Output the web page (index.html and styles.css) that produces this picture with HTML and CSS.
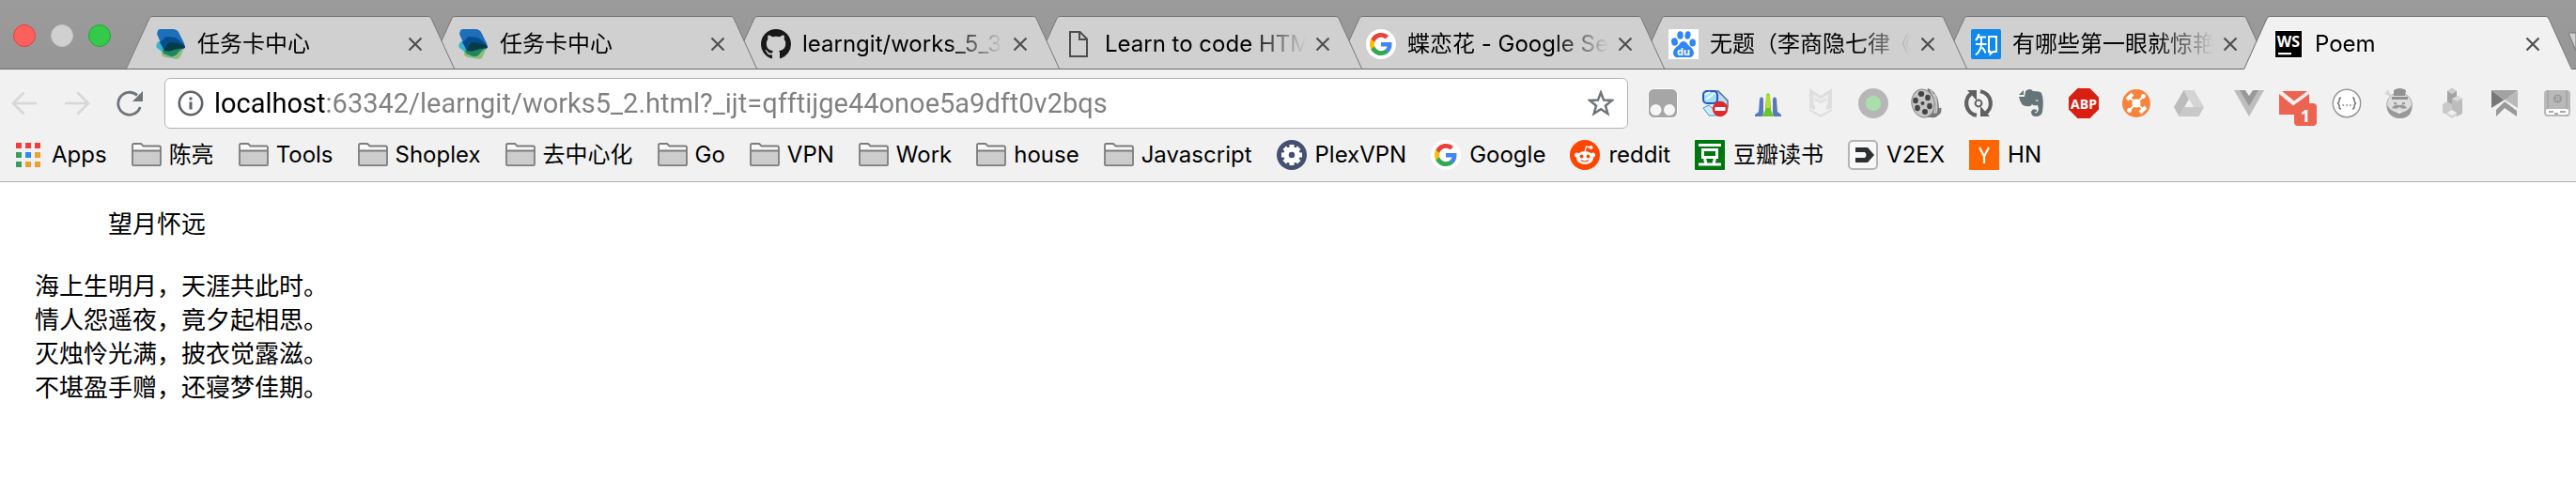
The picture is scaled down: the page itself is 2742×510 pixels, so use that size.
FILE: index.html
```
<!DOCTYPE html>
<html lang="zh-CN">
<head>
<meta charset="utf-8">
<title>Poem</title>
<link rel="stylesheet" href="styles.css">
</head>
<body>
<svg class="defs" aria-hidden="true">
  <symbol id="close" viewBox="0 0 16 16"><path d="M1.500 1.500 14.500 14.500M14.500 1.500 1.500 14.500" fill="none" stroke="#505050" stroke-width="2.200"/></symbol>
  <symbol id="edge-left" viewBox="0 0 28 56" preserveAspectRatio="none"><path class="edge-fill" d="M0 56 25 2.500Q26 .5 28 .5V56Z"/><path class="edge-line" d="M.5 56 25 2.500Q26 .5 28 .5"/></symbol>
  <symbol id="edge-right" viewBox="0 0 28 56" preserveAspectRatio="none"><path class="edge-fill" d="M28 56 3 2.500Q2 .5 0 .5V56Z"/><path class="edge-line" d="M27.500 56 3 2.500Q2 .5 0 .5"/></symbol>
  <symbol id="folder" viewBox="0 0 32 32"><path d="M1 27V5.500Q1 4 2.500 4H10L13 7.500H29.500Q31 7.500 31 9V27Q31 27.500 30 27.500H2Q1 27.500 1 27Z" fill="#f8f8f8"/><path d="M1.500 12H30.500V26.500H1.500Z" fill="#ccc"/><path d="M1 26V5.500Q1 4 2.500 4H9.500Q10.500 4 11 5L12.500 6.500H29.500Q31 6.500 31 8V26Q31 27.200 30 27.200H2Q1 27.200 1 26ZM1 11.500H31" fill="none" stroke="#7c7c7c" stroke-width="1.800"/></symbol>
  <symbol id="cards" viewBox="0 0 32 32"><path d="M6 24Q5 29 10 30L22 32Q25 32 26 29L30 20 12 19Z" fill="#8fbd78"/><path d="M3 13Q-1 16 1 20L12 28Q16 31 21 27L30 20 20 11Z" fill="#35b6cc"/><path d="M2 2Q2 0 5 0H18Q22 0 24 3L30 15Q31 18 30 20L12 23Q8 23 7 19L1 5Z" fill="#1d6fba"/><path d="M8 11Q9 8 12 8L20 9Q23 10 25 12L31 18V20L13 23Q8 23 7 19L4 14Z" fill="#054d8e"/><path d="M10 20Q12 15 16 14L27 16Q30 17 31 20 22 22 18 26Q12 26 8 23Z" fill="#053c48"/><path d="M7 22Q13 25 19 22L30 20Q26 21 23 26 20 30 16 29L8 26Z" fill="#22855f"/></symbol>
  <symbol id="google" viewBox="0 0 32 32"><circle cx="16" cy="16" r="16" fill="#fff"/><g transform="translate(4 4)"><path fill="#4285f4" d="M23.500 12.270c0-.79-.07-1.540-.19-2.270H12v4.510h6.470c-.29 1.480-1.140 2.730-2.400 3.580v3h3.860c2.260-2.090 3.570-5.170 3.570-8.820z"/><path fill="#34a853" d="M12 24c3.240 0 5.950-1.080 7.930-2.910l-3.860-3c-1.080.72-2.450 1.160-4.070 1.160-3.130 0-5.780-2.110-6.730-4.960H1.290v3.090C3.260 21.300 7.310 24 12 24z"/><path fill="#fbbc05" d="M5.270 14.290A7.200 7.200 0 0 1 4.890 12c0-.8.140-1.570.38-2.290V6.620H1.290A11.900 11.900 0 0 0 0 12c0 1.940.47 3.770 1.290 5.380l3.980-3.090z"/><path fill="#ea4335" d="M12 4.750c1.770 0 3.350.61 4.600 1.800l3.420-3.420C17.950 1.190 15.240 0 12 0 7.310 0 3.260 2.700 1.290 6.620l3.980 3.090C6.220 6.860 8.870 4.750 12 4.750z"/></g></symbol>
</svg>

<header class="browser">
  <div class="strip">
    <div class="lights">
      <button class="light red" aria-label="Close window"></button>
      <button class="light grey" aria-label="Minimize window"></button>
      <button class="light green" aria-label="Zoom window"></button>
    </div>
    <div class="tabs" role="tablist">
      <div class="tab" role="tab"><svg class="edge"><use href="#edge-left"/></svg><div class="tab-body"><svg class="icon"><use href="#cards"/></svg><span class="title">任务卡中心</span><button class="close" aria-label="Close tab"><svg><use href="#close"/></svg></button></div><svg class="edge"><use href="#edge-right"/></svg></div>
      <div class="tab" role="tab"><svg class="edge"><use href="#edge-left"/></svg><div class="tab-body"><svg class="icon"><use href="#cards"/></svg><span class="title">任务卡中心</span><button class="close" aria-label="Close tab"><svg><use href="#close"/></svg></button></div><svg class="edge"><use href="#edge-right"/></svg></div>
      <div class="tab" role="tab"><svg class="edge"><use href="#edge-left"/></svg><div class="tab-body"><svg class="icon" viewBox="0 0 16 16"><path fill="#191717" d="M8 0C3.580 0 0 3.580 0 8c0 3.540 2.290 6.530 5.470 7.590.4.070.55-.17.55-.38 0-.19-.01-.82-.01-1.490-2.010.37-2.530-.49-2.690-.94-.09-.23-.48-.94-.82-1.130-.28-.15-.68-.52-.01-.53.63-.01 1.080.58 1.230.82.72 1.210 1.870.87 2.330.66.07-.52.28-.87.51-1.070-1.780-.2-3.640-.89-3.640-3.950 0-.87.31-1.590.82-2.150-.08-.2-.36-1.020.08-2.120 0 0 .67-.21 2.200.82.64-.18 1.320-.27 2-.27s1.360.09 2 .27c1.530-1.040 2.200-.82 2.200-.82.44 1.100.16 1.920.08 2.120.51.56.82 1.270.82 2.150 0 3.070-1.870 3.750-3.650 3.950.29.25.54.73.54 1.480 0 1.070-.01 1.930-.01 2.200 0 .21.150.46.55.38A8.010 8.010 0 0 0 16 8c0-4.420-3.580-8-8-8z"/></svg><span class="title">learngit/works_5_3.html</span><button class="close" aria-label="Close tab"><svg><use href="#close"/></svg></button></div><svg class="edge"><use href="#edge-right"/></svg></div>
      <div class="tab" role="tab"><svg class="edge"><use href="#edge-left"/></svg><div class="tab-body"><svg class="icon" viewBox="0 0 32 32"><path d="M7 3H17.500L25 10.500V29H7ZM17 3V11H25" fill="none" stroke="#4d4d4d" stroke-width="2"/></svg><span class="title">Learn to code HTML</span><button class="close" aria-label="Close tab"><svg><use href="#close"/></svg></button></div><svg class="edge"><use href="#edge-right"/></svg></div>
      <div class="tab" role="tab"><svg class="edge"><use href="#edge-left"/></svg><div class="tab-body"><svg class="icon"><use href="#google"/></svg><span class="title">蝶恋花 - Google Search</span><button class="close" aria-label="Close tab"><svg><use href="#close"/></svg></button></div><svg class="edge"><use href="#edge-right"/></svg></div>
      <div class="tab" role="tab"><svg class="edge"><use href="#edge-left"/></svg><div class="tab-body"><svg class="icon" viewBox="0 0 32 32"><path d="M0 0H32V32H0Z" fill="#fff"/><g fill="#2f86f6"><ellipse cx="6.500" cy="13.500" rx="3.400" ry="4.200" transform="rotate(-12 6.500 13.500)"/><ellipse cx="12.500" cy="6.500" rx="3.200" ry="4.200"/><ellipse cx="20.500" cy="6.500" rx="3" ry="4.200" transform="rotate(10 20.500 6.500)"/><ellipse cx="25.700" cy="14.500" rx="3.300" ry="4"/><path d="M16 13Q19 13 21 17 27 21 27 25.500 26 31 21 30H11Q5 31 5 25 5 21 11 17 13 13 16 13Z"/></g><text x="16" y="27.500" text-anchor="middle" class="baidu">du</text></svg><span class="title">无题（李商隐七律《无题》）</span><button class="close" aria-label="Close tab"><svg><use href="#close"/></svg></button></div><svg class="edge"><use href="#edge-right"/></svg></div>
      <div class="tab" role="tab"><svg class="edge"><use href="#edge-left"/></svg><div class="tab-body"><svg class="icon" viewBox="0 0 32 32"><rect width="32" height="32" rx="2" fill="#0f88eb"/><path d="M8.500 5Q7.500 9.500 5 12M7.500 8.500H16M5 16H16.500M11 8.500V16Q10.500 23 5 27.500M12 19.500Q14.500 22.500 15.500 25.500M19 8H27V24H23.500L20.500 26.500V24H19Z" fill="none" stroke="#fff" stroke-width="2"/></svg><span class="title">有哪些第一眼就惊艳到你的诗词</span><button class="close" aria-label="Close tab"><svg><use href="#close"/></svg></button></div><svg class="edge"><use href="#edge-right"/></svg></div>
      <div class="tab active" role="tab" aria-selected="true"><svg class="edge"><use href="#edge-left"/></svg><div class="tab-body"><svg class="icon" viewBox="0 0 32 32"><path d="M1 1H31V31H1Z" fill="#fff"/><path d="M2 2H30V30H2Z"/><path d="M5 25H19V27.200H5Z" fill="#fff"/><text x="16" y="18.500" text-anchor="middle" class="ws">WS</text></svg><span class="title">Poem</span><button class="close" aria-label="Close tab"><svg><use href="#close"/></svg></button></div><svg class="edge"><use href="#edge-right"/></svg></div>
    </div>
    <button class="new-tab" aria-label="New tab"><svg viewBox="0 0 8 40"><path d="M8 1H1.500Q0 1 .7 3L8 20Z" fill="#d0d0d0" stroke="#777"/></svg></button>
  </div>

  <div class="toolbar">
    <nav class="nav">
      <button aria-label="Back"><svg viewBox="0 0 28 28"><path d="M27 14H2M13.500 2.500 2 14 13.500 25.500" fill="none" stroke="#d5d7d9" stroke-width="2.600"/></svg></button>
      <button aria-label="Forward"><svg viewBox="0 0 28 28"><path d="M1 14H26M14.500 2.500 26 14 14.500 25.500" fill="none" stroke="#d5d7d9" stroke-width="2.600"/></svg></button>
      <button aria-label="Reload"><svg viewBox="0 0 28 28"><path d="M25.200 18A12 12 0 1 1 22 5.500" fill="none" stroke="#6f7478" stroke-width="2.800"/><path d="M28 1V12H17Z" fill="#6f7478"/></svg></button>
    </nav>
    <div class="omnibox">
      <button aria-label="Site information"><svg viewBox="0 0 28 28"><circle cx="14" cy="14" r="12.200" fill="none" stroke="#5f6368" stroke-width="2.600"/><path d="M12.500 7.500H15.500V10.500H12.500ZM12.500 12.500H15.500V20.500H12.500Z" fill="#5f6368"/></svg></button>
      <input class="url" type="text" aria-label="Address" value="localhost:63342/learngit/works5_2.html?_ijt=qfftijge44onoe5a9dft0v2bqs">
      <button aria-label="Bookmark this page"><svg viewBox="0 0 28 28"><path d="M14 2.500 17.100 10.600 25.800 11 19 16.500 21.300 25 14 20.200 6.700 25 9 16.500 2.200 11 10.900 10.600Z" fill="none" stroke="#6f7478" stroke-width="2.500"/></svg></button>
    </div>
    <div class="extensions">
      <button aria-label="Tampermonkey"><svg viewBox="0 0 40 40"><rect x="4.500" y="4.500" width="31" height="31" rx="6" fill="#a6a6a6" stroke="#fff"/><circle cx="12.500" cy="27" r="6" fill="#f6f6f6"/><circle cx="27" cy="27" r="6" fill="#f6f6f6"/></svg></button>
      <button aria-label="Site blocker"><svg viewBox="0 0 40 40"><path d="M20 7H23L33 17V24H23Z" fill="#b9dcf5" stroke="#557299" stroke-width="1.500"/><path d="M7 25 13 22 26 33H13Z" fill="#c7ecfb" stroke="#4d91c7"/><rect x="7" y="7" width="15" height="13" rx="4" fill="#a5ddfa" stroke="#2459c6" stroke-width="2"/><path d="M9 11 14 8M10 16 19 9" stroke="#e9faff" stroke-width="2"/><circle cx="25" cy="26" r="8.200" fill="#df292b"/><path d="M19.500 24H30.500V28H19.500Z" fill="#fff"/></svg></button>
      <button aria-label="Towers"><svg viewBox="0 0 40 40"><path d="M6 34V32L10 29 11 15 13 13 15 15V31L14 34ZM34 34V32L30 29 29 15 27 13 25 15V31L26 34Z" fill="#5a79bd"/><path d="M14 34 17 27 18 11 20 9 22 11 23 27 26 34Z" fill="#69c52b"/><path d="M18 25V12L20 10 22 12V25Z" fill="#b5dd2c"/></svg></button>
      <button aria-label="Markdown"><svg viewBox="0 0 40 40" fill="#dedede"><path d="M8 4 20 12 32 4V25L26 27V17L20 20 14 17V27L8 25Z"/><path d="M12 10 20 15 28 10V22H26V15L20 18 14 15V22H12Z" fill="#ebebeb"/><path d="M8 26 20 32 32 26V28L20 35 8 28Z"/></svg></button>
      <button aria-label="Recorder"><svg viewBox="0 0 40 40"><circle cx="20" cy="20" r="16" fill="#b6b6b6"/><circle cx="20" cy="20" r="8.200" fill="#a9dfab"/></svg></button>
      <button aria-label="Video"><svg viewBox="0 0 40 40"><path d="M22 4Q34 8 34 27L36 30 30 35H16Z" fill="#777"/><path d="M25 6Q32 16 29 31M29 10Q33 19 31 31" fill="none" stroke="#ccc" stroke-width="1.500"/><ellipse cx="17" cy="20" rx="12" ry="15" fill="#c5c5c5" stroke="#888" transform="rotate(-12 17 20)"/><g fill="#444"><ellipse cx="15" cy="10" rx="3.200" ry="3"/><ellipse cx="22" cy="14" rx="2.800" ry="3.200"/><ellipse cx="9" cy="17" rx="2.800" ry="3.200"/><ellipse cx="24" cy="23" rx="2.800" ry="3.200"/><ellipse cx="11" cy="25" rx="2.800" ry="3.200"/><ellipse cx="19" cy="29" rx="3" ry="3"/><circle cx="16.500" cy="20" r="2"/></g><path d="M26 34Q36 32 35 25" fill="none" stroke="#777" stroke-width="3"/></svg></button>
      <button aria-label="Sync"><svg viewBox="0 0 40 40"><path d="M14 8.500A13 13 0 0 0 18 32.800M26 31.500A13 13 0 0 0 22 7.200" fill="none" stroke="#606060" stroke-width="4.200"/><path d="M8 6H18V17ZM32 34H22V23Z" fill="#606060"/><circle cx="20" cy="20" r="3.400" fill="none" stroke="#606060" stroke-width="2"/></svg></button>
      <button aria-label="Evernote"><svg viewBox="0 0 40 40"><path d="M14 7Q19 3 22 7 30 7 31 9 34 16 32 29 31 34 25 34 20 34 20 29 21 25 26 27V29Q24 28 24 30 27 31 28 26L27 22Q22 23 21 21 20 24 15 23 9 23 7 13L13 13Z" fill="#657479"/><path d="M7 11 12 6V11Z" fill="#657479"/><path d="M24 17Q27 15 28 18Z" fill="#f1f1f1"/></svg></button>
      <button aria-label="Adblock Plus"><svg viewBox="0 0 40 40"><path d="M13.500 4H26.500L36 13.500V26.500L26.500 36H13.500L4 26.500V13.500Z" fill="#d81f12"/><text x="20" y="25.500" text-anchor="middle" class="abp">ABP</text></svg></button>
      <button aria-label="Hub"><svg viewBox="0 0 40 40"><circle cx="20" cy="20" r="15" fill="#f6843d"/><g stroke="#fff" fill="none"><path d="M12 13 28 27M28 12 13 27" stroke-width="2"/><path d="M10 16 16 10M24 30 30 24" stroke-width="4"/></g><circle cx="20" cy="20" r="4.500" fill="#fff"/><circle cx="27.500" cy="12.500" r="2.400" fill="#fff"/><circle cx="12.500" cy="27.500" r="2.400" fill="#fff"/></svg></button>
      <button aria-label="Drive"><svg viewBox="0 0 40 40"><path d="M14.500 6H25.500L36 24H25Z" fill="#d4d4d4"/><path d="M14.500 6 20 15.500 9.500 34 4 24Z" fill="#bcbcbc"/><path d="M15 24H36L30.500 34H9.500Z" fill="#c8c8c8"/></svg></button>
      <button aria-label="Vue"><svg viewBox="0 0 40 40"><path d="M12 6H44L28 34Z" fill="#bdbdbd"/><path d="M18 6H24L28 12 32 6H38L28 23Z" fill="#999"/><path d="M24 6H32L28 12Z" fill="#f1f1f1"/></svg></button>
      <button class="mail" aria-label="Mail, 1 unread"><svg viewBox="0 0 40 40"><path d="M4 10 19 22.500 36 10V32H4Z" fill="#ed6352"/><path d="M7 7H34L20 17.500Z" fill="#ed6352"/></svg><span class="badge">1</span></button>
      <button aria-label="JSON"><svg viewBox="0 0 40 40"><circle cx="20" cy="20" r="14.700" fill="#fff" stroke="#999" stroke-width="1.500"/><path d="M14 14Q12 14 12 16.500 12 19.500 10 20 12 20.500 12 23.500 12 26 14 26M26 14Q28 14 28 16.500 28 19.500 30 20 28 20.500 28 23.500 28 26 26 26" fill="none" stroke="#777" stroke-width="1.500"/><path d="M15.500 22H17M19.300 22H20.800M23 22H24.500" stroke="#777" stroke-width="1.500"/></svg></button>
      <button aria-label="Gentleman"><svg viewBox="0 0 40 40"><circle cx="20" cy="22" r="13.500" fill="#ddd" stroke="#aaa"/><path d="M7 22Q12 30 20 30 28 30 33 22 34 36 20 36 7 35 7 22Z" fill="#999"/><path d="M14 6Q20 2 27 6L26 12H14ZM12 13H29V16H12Z" fill="#929292"/><path d="M20 22Q25 20 28 25 23 27 20 24 17 27 12 25 15 20 20 22Z" fill="#999"/><path d="M14 20H17M23 20H26" stroke="#999" stroke-width="2"/><path d="M17 29Q20 27 23 29 20 33 17 29Z" fill="#e8e8e8"/><path d="M5 9 12 12M7 6 11 15" stroke="#d4d4d4" stroke-width="2"/></svg></button>
      <button aria-label="Blocks"><svg viewBox="0 0 40 40"><path d="M15 7 20 4 25 7V28L20 31 15 28Z" fill="#a3a3a3"/><path d="M15 7 20 10 25 7 20 4Z" fill="#ccc"/><path d="M20 15 26 12 31 15V31L25 34 20 31Z" fill="#bcbcbc"/><path d="M20 15 26 12 31 15 25 18Z" fill="#dadada"/><path d="M10 21 15 18 20 21V34L10 30Z" fill="#c9c9c9"/><path d="M15 30 20 27 25 30V33L20 36 15 33Z" fill="#d4d4d4"/><path d="M15 30 20 27 25 30 20 33Z" fill="#eee"/></svg></button>
      <button aria-label="Read later"><svg viewBox="0 0 40 40"><path d="M6 6 20 17 6 26Z" fill="#777"/><path d="M6 6H34L20 17Z" fill="#a2a2a2"/><path d="M34 6V26L20 17Z" fill="#b9b9b9"/><path d="M20 18 33 28V34L20 25 11 34V27Z" fill="#999"/><path d="M6 26 20 17 34 26" fill="none" stroke="#f1f1f1" stroke-width="1.500"/></svg></button>
      <button aria-label="Reader"><svg viewBox="0 0 40 40"><rect x="6" y="6" width="28" height="28" rx="4" fill="#b9b9b9"/><path d="M10 6V26M30 6V34" stroke="#999"/><rect x="8" y="26" width="24" height="6" rx="2" fill="#fff"/><path d="M11 29H16M17 31H21M23 29H29" stroke="#aaa" stroke-width="2"/><circle cx="20.500" cy="15" r="4.500" fill="#989898"/><text x="20.500" y="17.500" text-anchor="middle" class="reader">R</text></svg></button>
    </div>
  </div>

  <nav class="bookmarks">
    <a href="#" class="apps"><svg viewBox="0 0 26 26"><path d="M0 0H6V6H0ZM10 0H16V6H10ZM20 0H26V6H20Z" fill="#f43c3c"/><path d="M0 10H6V16H0ZM0 20H6V26H0Z" fill="#3a9d5b"/><path d="M10 10H16V16H10Z" fill="#2a8af6"/><path d="M20 10H26V16H20ZM10 20H16V26H10ZM20 20H26V26H20Z" fill="#efa02a"/></svg>Apps</a>
    <a href="#"><svg><use href="#folder"/></svg>陈亮</a>
    <a href="#"><svg><use href="#folder"/></svg>Tools</a>
    <a href="#"><svg><use href="#folder"/></svg>Shoplex</a>
    <a href="#"><svg><use href="#folder"/></svg>去中心化</a>
    <a href="#"><svg><use href="#folder"/></svg>Go</a>
    <a href="#"><svg><use href="#folder"/></svg>VPN</a>
    <a href="#"><svg><use href="#folder"/></svg>Work</a>
    <a href="#"><svg><use href="#folder"/></svg>house</a>
    <a href="#"><svg><use href="#folder"/></svg>Javascript</a>
    <a href="#" class="site"><svg viewBox="0 0 32 32"><circle cx="16" cy="16" r="16" fill="#435070"/><circle cx="16" cy="16" r="6" fill="none" stroke="#fff" stroke-width="5.500"/><g stroke="#fff" stroke-width="5"><path d="M16 5V9M16 23V27M5 16H9M23 16H27M8.200 8.200 11 11M21 21 23.800 23.800M23.800 8.200 21 11M11 21 8.200 23.800"/></g></svg>PlexVPN</a>
    <a href="#" class="site"><svg><use href="#google"/></svg>Google</a>
    <a href="#" class="site"><svg viewBox="0 0 32 32"><circle cx="16" cy="16" r="16" fill="#ff4500"/><ellipse cx="16" cy="19" rx="9" ry="7" fill="#fff"/><circle cx="7.500" cy="16" r="2.500" fill="#fff"/><circle cx="24.500" cy="16" r="2.500" fill="#fff"/><path d="M16 13 17.500 7 22 8" fill="none" stroke="#fff" stroke-width="1.300"/><circle cx="22.500" cy="8" r="2" fill="#fff"/><circle cx="12.500" cy="17.500" r="1.900" fill="#ff4500"/><circle cx="19.500" cy="17.500" r="1.900" fill="#ff4500"/><path d="M12 21.500Q16 24.500 20 21.500" fill="none" stroke="#ff4500" stroke-width="1.200"/></svg>reddit</a>
    <a href="#" class="site"><svg viewBox="0 0 32 32"><rect width="32" height="32" rx="1" fill="#007610"/><path d="M4 5.500H28M4 26H28M8.500 10.500H23.500V18.500H8.500ZM10.500 20 12 25M21.500 20 20 25" fill="none" stroke="#fff" stroke-width="3"/></svg>豆瓣读书</a>
    <a href="#" class="site"><svg viewBox="0 0 32 32"><rect x="1" y="1" width="30" height="30" rx="4" fill="#f8f8f8" stroke="#b5b5b5" stroke-width="2"/><path d="M8 8H21L28 16 21 24H8V19H18Q21 16 18 13H8Z" fill="#2d2f31"/></svg>V2EX</a>
    <a href="#" class="site"><svg viewBox="0 0 32 32"><path d="M0 0H32V32H0Z" fill="#f60"/><path d="M11 8 16 17.500 21 8M16 17V25" fill="none" stroke="#fff" stroke-width="2.200"/></svg>HN</a>
  </nav>
</header>

<main class="page">
  <h1>望月怀远</h1>
  <p>海上生明月，天涯共此时。<br>情人怨遥夜，竟夕起相思。<br>灭烛怜光满，披衣觉露滋。<br>不堪盈手赠，还寝梦佳期。</p>
</main>
</body>
</html>
```
FILE: styles.css
```
* {
  box-sizing: border-box;
}

body {
  margin: 0;
  background: #fff;
  color: #000;
  font-family: Inter, "Noto Sans CJK SC", sans-serif;
  font-size: 24px;
  overflow-x: hidden;
}

button {
  padding: 0;
  border: 0;
  background: none;
}

svg {
  display: block;
  flex: none;
}

.defs {
  position: absolute;
  width: 0;
  height: 0;
}

.browser {
  background: #f1f1f1;
  border-bottom: 1px solid #b2b2b2;
}

/* Tab strip */
.strip {
  display: flex;
  align-items: flex-end;
  height: 74px;
  background: linear-gradient(#9b9b9b, #969696);
  box-shadow: inset 0 -1px #6b6b6b;
  overflow: hidden;
}

.lights {
  display: flex;
  flex: none;
  gap: 16px;
  width: 134px;
  padding: 0 0 24px 14px;
}

.light {
  width: 24px;
  height: 24px;
  border-radius: 50%;
}

.red {
  background: #fc605c;
  border: 1px solid #e0443f;
}

.grey {
  background: #d0d0d0;
  border: 1px solid #c0c0c0;
}

.green {
  background: #34c94a;
  border: 1px solid #24a635;
}

.tabs {
  display: flex;
  flex: 0 1 2604px;
  min-width: 0;
}

.tab {
  display: flex;
  position: relative;
  flex: 1 1 0;
  min-width: 0;
  height: 56px;
  margin-bottom: 1px;
  color: #000;
  --tab: #d0d0d0;
}

.tab + .tab {
  margin-left: -28px;
}

.tab:nth-child(1) { z-index: 8; }
.tab:nth-child(2) { z-index: 7; }
.tab:nth-child(3) { z-index: 6; }
.tab:nth-child(4) { z-index: 5; }
.tab:nth-child(5) { z-index: 4; }
.tab:nth-child(6) { z-index: 3; }
.tab:nth-child(7) { z-index: 2; }

.edge {
  width: 28px;
  height: 56px;
}

.edge-fill {
  fill: var(--tab);
}

.edge-line {
  fill: none;
  stroke: #777;
}

.tab-body {
  display: flex;
  flex: 1;
  align-items: center;
  min-width: 0;
  height: 56px;
  padding: 2px 6px 0 4px;
  background: var(--tab);
  border-top: 1px solid #707070;
}

.tab.active {
  z-index: 9;
  height: 57px;
  margin-bottom: 0;
  --tab: #f1f1f1;
}

.active .edge,
.active .tab-body {
  height: 57px;
}

.icon {
  width: 32px;
  height: 32px;
  margin-right: 12px;
}

.title {
  flex: 1;
  min-width: 0;
  overflow: hidden;
  white-space: nowrap;
  line-height: 36px;
  -webkit-mask-image: linear-gradient(to left, transparent, #000 60px);
  mask-image: linear-gradient(to left, transparent, #000 60px);
}

.close {
  flex: none;
  margin-left: 10px;
}

.close svg {
  width: 16px;
  height: 16px;
}

.new-tab {
  flex: none;
  width: 8px;
  margin-left: -4px;
}

.new-tab svg {
  width: 8px;
  height: 40px;
}

.baidu {
  fill: #fff;
  font: bold 11px "Open Sans", sans-serif;
}

.ws {
  fill: #fff;
  font: bold 16px "Open Sans", sans-serif;
}

.abp {
  fill: #fff;
  font: bold 14px "Open Sans", sans-serif;
}

.reader {
  fill: #ccc;
  font: 7px Inter, sans-serif;
}

/* Toolbar */
.toolbar {
  display: flex;
  align-items: center;
  padding-top: 9px;
}

.nav {
  display: flex;
  gap: 28px;
  padding: 0 23px 0 12px;
}

.nav svg,
.omnibox svg {
  width: 28px;
  height: 28px;
}

.omnibox {
  display: flex;
  flex: 1;
  align-items: center;
  min-width: 0;
  height: 54px;
  margin-right: 17px;
  padding: 0 14px 0 13px;
  background: #fff;
  border: 1px solid #b4b4b4;
  border-radius: 6px;
}

.url {
  flex: 1;
  min-width: 0;
  height: 44px;
  margin-left: 11px;
  padding: 0;
  border: 0;
  outline: 0;
  background: linear-gradient(90deg, #000 119px, #808080 119px);
  -webkit-background-clip: text;
  background-clip: text;
  color: transparent;
  font: 29px Roboto, sans-serif;
}

.extensions {
  display: flex;
  flex: none;
  gap: 16px;
}

.extensions button {
  width: 40px;
  height: 40px;
}

.extensions svg {
  width: 40px;
  height: 40px;
  overflow: visible;
}

.mail {
  position: relative;
}

.badge {
  position: absolute;
  left: 20px;
  top: 20px;
  width: 24px;
  height: 24px;
  border-radius: 4px;
  background: #ed6352;
  color: #fff;
  font: bold 18px/26px "Open Sans", sans-serif;
}

/* Bookmarks */
.bookmarks {
  display: flex;
  gap: 26px;
  align-items: center;
  height: 56px;
  padding-left: 17px;
}

.bookmarks a {
  display: flex;
  flex: none;
  gap: 8px;
  align-items: center;
  color: #000;
  text-decoration: none;
  line-height: 36px;
  white-space: nowrap;
}

.bookmarks a.site {
  gap: 9px;
}

.bookmarks a.apps {
  gap: 12px;
}

.bookmarks svg {
  width: 32px;
  height: 32px;
}

.bookmarks .apps svg {
  width: 26px;
  height: 26px;
}

/* Poem */
.page {
  padding: 25px 37px;
  font: 26px/36px "Noto Sans CJK SC", sans-serif;
}

.page h1 {
  margin: 0 0 30px;
  padding-left: 78px;
  font: inherit;
}

.page p {
  margin: 0;
}
```
